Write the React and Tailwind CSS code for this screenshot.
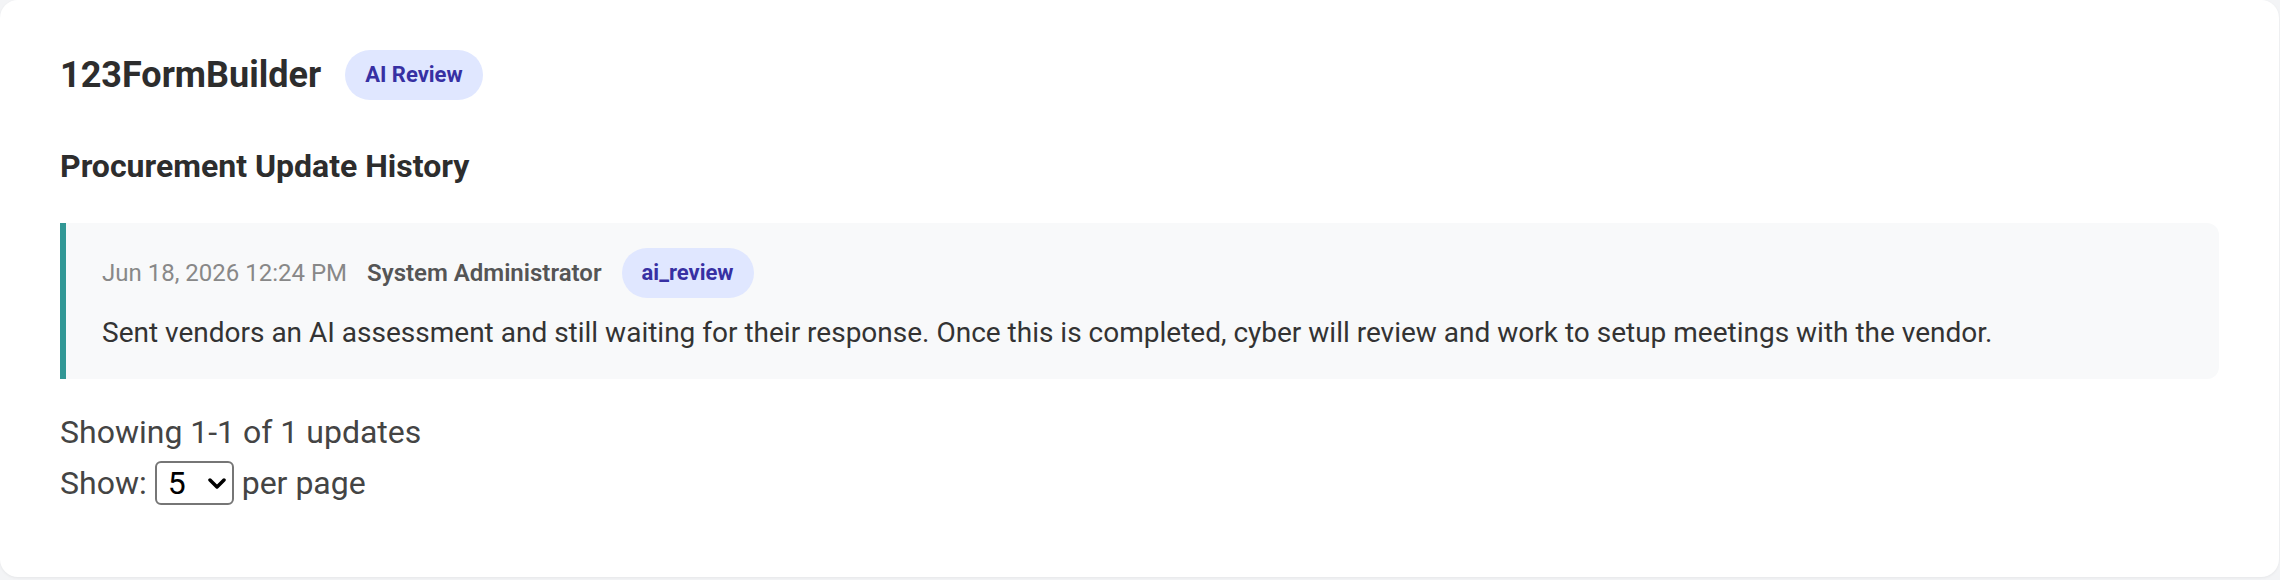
import React from 'react';

const updates = [
  {
    id: 1,
    date: 'Jun 18, 2026 12:24 PM',
    author: 'System Administrator',
    status: 'ai_review',
    text: 'Sent vendors an AI assessment and still waiting for their response. Once this is completed, cyber will review and work to setup meetings with the vendor.',
  },
];

function Pill({ children }) {
  return (
    <span className="rounded-full bg-[#e0e7ff] px-[20px] py-[9px] text-[22px] font-bold leading-[32px] text-[#3730a3]">
      {children}
    </span>
  );
}

export default function App() {
  return (
    <div className="h-[580px] w-full bg-[#f3f4f6] pr-[1px] pb-[3px] font-['Roboto',sans-serif]">
      <div className="h-full rounded-[18px] bg-white px-[60px] pt-[50px] shadow-[0_1px_3px_rgba(0,0,0,0.06)]">
        <div className="flex items-center gap-[24px]">
          <h1 className="text-[36px] font-bold leading-[44px] text-[#2d2d2d]">123FormBuilder</h1>
          <Pill>AI Review</Pill>
        </div>

        <h2 className="mt-[47px] text-[32px] font-bold leading-[38px] text-[#2d2d2d]">
          Procurement Update History
        </h2>

        <div className="mt-[38px] flex flex-col">
          {updates.map((u) => (
            <div
              key={u.id}
              className="rounded-r-[12px] border-l-[6px] border-[#319795] bg-[#f8f9fa] pt-[25px] pb-[25px] pl-[36px] pr-[36px]"
            >
              <div className="flex items-center gap-[20px]">
                <span className="text-[24px] text-[#888888]">{u.date}</span>
                <span className="text-[24px] font-semibold text-[#555555]">{u.author}</span>
                <Pill>{u.status}</Pill>
              </div>
              <p className="mt-[14px] text-[28px] leading-[42px] text-[#333333]">{u.text}</p>
            </div>
          ))}
        </div>

        <div className="mt-[34px] text-[32px] text-[#444444]">
          <div className="leading-[38px]">Showing 1-1 of 1 updates</div>
          <div className="mt-[10px] flex items-center leading-[38px]">
            <span>Show:</span>
            <span className="relative ml-[8px] mr-[8px] inline-flex">
              <select
                defaultValue="5"
                className="h-[44px] w-[79px] appearance-none rounded-[6px] border-2 border-[#767676] bg-white pl-[11px] text-[32px] text-black"
              >
                <option value="5">5</option>
                <option value="10">10</option>
                <option value="25">25</option>
              </select>
              <svg
                className="pointer-events-none absolute right-[8px] top-[17px]"
                width="18"
                height="11"
                viewBox="0 0 18 11"
                fill="none"
              >
                <path d="M2 2L9 9L16 2" stroke="#000" strokeWidth="3.5" strokeLinecap="round" strokeLinejoin="round" />
              </svg>
            </span>
            <span>per page</span>
          </div>
        </div>
      </div>
    </div>
  );
}
